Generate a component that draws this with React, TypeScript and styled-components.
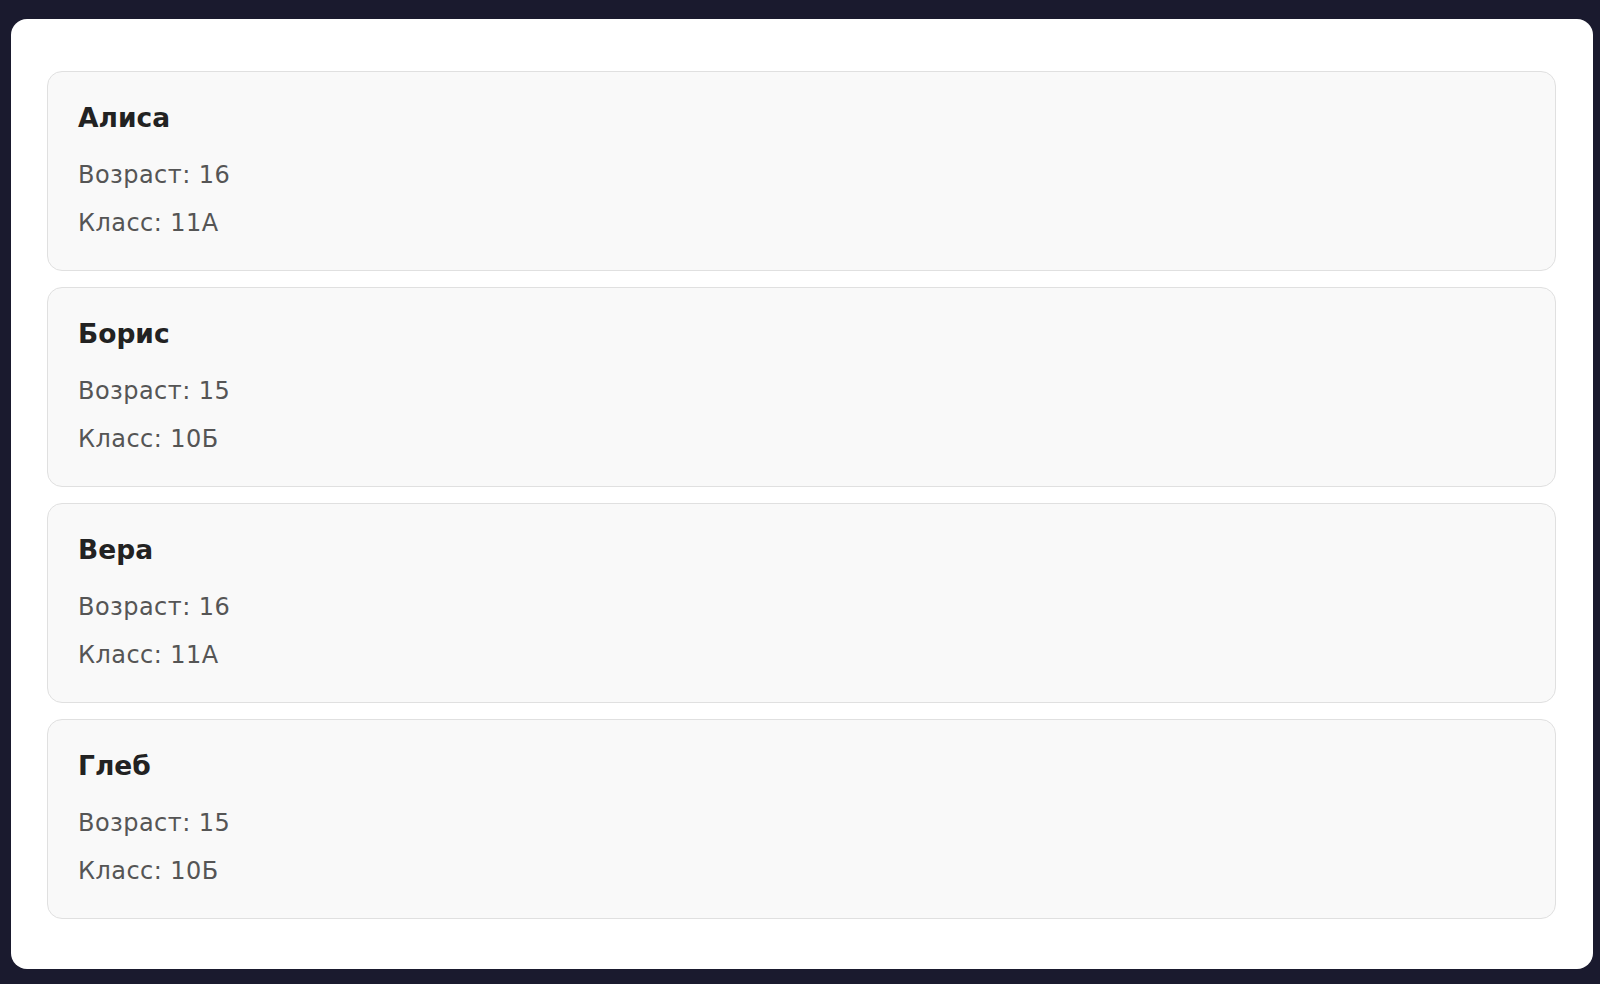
import styled, { createGlobalStyle } from "styled-components";

const GlobalStyle = createGlobalStyle`
  html, body {
    margin: 0;
    padding: 0;
    background: #1a1a2e;
  }
  body {
    font-family: "DejaVu Sans", "Noto Sans", sans-serif;
  }
`;

const Page = styled.div`
  padding: 19px 7px 15px 11px;
  min-height: 984px;
  box-sizing: border-box;
`;

const Panel = styled.main`
  background: #ffffff;
  border-radius: 16px;
  padding: 52px 37px 50px 36px;
  display: flex;
  flex-direction: column;
  gap: 16px;
`;

const Card = styled.section`
  background: #f9f9f9;
  border: 1px solid #e0e0e0;
  border-radius: 15px;
  padding: 29px 30px 29px;
  display: flex;
  flex-direction: column;
  gap: 12px;
`;

const Name = styled.h3`
  margin: 0 0 10px;
  font-size: 26.5px;
  line-height: 34px;
  font-weight: 700;
  color: #222222;
`;

const Info = styled.p`
  margin: 0;
  font-size: 24px;
  line-height: 36px;
  letter-spacing: 0.45px;
  color: #555555;
`;

const students = [
  { name: "Алиса", age: 16, grade: "11А" },
  { name: "Борис", age: 15, grade: "10Б" },
  { name: "Вера", age: 16, grade: "11А" },
  { name: "Глеб", age: 15, grade: "10Б" },
];

export default function App() {
  return (
    <>
      <GlobalStyle />
      <Page>
        <Panel>
          {students.map((s) => (
            <Card key={s.name}>
              <Name>{s.name}</Name>
              <Info>Возраст: {s.age}</Info>
              <Info>Класс: {s.grade}</Info>
            </Card>
          ))}
        </Panel>
      </Page>
    </>
  );
}
